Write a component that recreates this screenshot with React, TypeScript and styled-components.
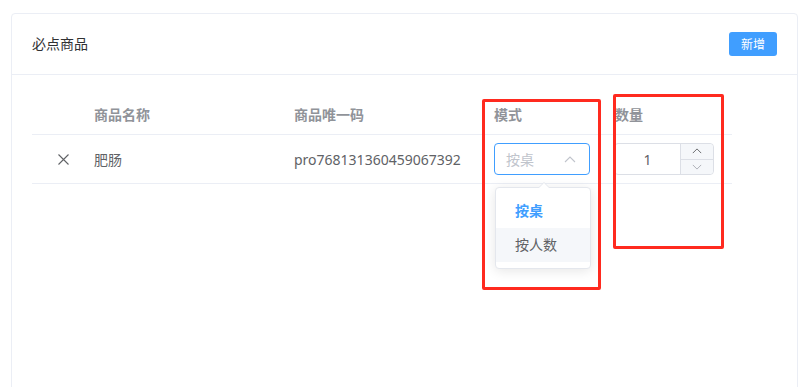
import styled, { createGlobalStyle } from 'styled-components';

const GlobalStyle = createGlobalStyle`
  html, body {
    margin: 0;
    padding: 0;
    background: #fff;
    height: 387px;
    overflow: hidden;
  }
  body {
    font-family: "Noto Sans", "Noto Sans CJK SC", sans-serif;
    font-size: 14px;
    color: #606266;
  }
`;

const Page = styled.div`
  position: relative;
  padding: 13px 8px 0 11px;
  height: 387px;
  box-sizing: border-box;
  overflow: hidden;
`;

const Card = styled.div`
  border: 1px solid #ebeef5;
  border-radius: 4px;
  background: #fff;
  height: 420px;
`;

const CardHeader = styled.div`
  display: flex;
  align-items: center;
  justify-content: space-between;
  padding: 18px 20px;
  border-bottom: 1px solid #ebeef5;
  line-height: 24px;
`;

const Title = styled.span`
  font-size: 14px;
  color: #303133;
`;

const PrimaryButton = styled.button`
  height: 24px;
  width: 48px;
  padding: 0;
  border: none;
  border-radius: 3px;
  background: #409eff;
  color: #fff;
  font-family: inherit;
  font-size: 12px;
`;

const CardBody = styled.div`
  padding: 20px;
`;

const Table = styled.div`
  width: 700px;
`;

const Row = styled.div<{ $head?: boolean }>`
  display: grid;
  grid-template-columns: 52px 200px 200px 121px 1fr;
  align-items: center;
  height: ${p => (p.$head ? '39px' : '48px')};
  border-bottom: 1px solid #ebeef5;
`;

const HeadCell = styled.div`
  padding-left: 10px;
  font-weight: bold;
  color: #909399;
  font-size: 14px;
  line-height: 23px;
`;

const Cell = styled.div`
  padding-left: 10px;
  font-size: 14px;
  color: #606266;
  line-height: 23px;
  position: relative;
`;

const IconCell = styled.div`
  padding-left: 26px;
  display: flex;
  align-items: center;
`;

const SelectBox = styled.div`
  box-sizing: border-box;
  width: 96px;
  height: 32px;
  border: 1px solid #409eff;
  border-radius: 4px;
  display: flex;
  align-items: center;
  justify-content: space-between;
  padding: 0 13px 0 11px;
  color: #c0c4cc;
  font-size: 14px;
`;

const Popper = styled.div`
  position: absolute;
  top: 44px;
  left: 11px;
  width: 96px;
  box-sizing: border-box;
  border: 1px solid #e4e7ed;
  border-radius: 4px;
  background: #fff;
  box-shadow: 0 2px 12px 0 rgba(0, 0, 0, 0.1);
  padding: 6px 0;
  z-index: 2;

  &::before {
    content: '';
    position: absolute;
    top: -6px;
    left: 42px;
    border-left: 6px solid transparent;
    border-right: 6px solid transparent;
    border-bottom: 6px solid #e4e7ed;
  }
  &::after {
    content: '';
    position: absolute;
    top: -5px;
    left: 43px;
    border-left: 5px solid transparent;
    border-right: 5px solid transparent;
    border-bottom: 5px solid #fff;
  }
`;

const Option = styled.div<{ $selected?: boolean; $hover?: boolean }>`
  height: 34px;
  line-height: 34px;
  padding-left: 19px;
  font-size: 14px;
  color: ${p => (p.$selected ? '#409eff' : '#606266')};
  font-weight: ${p => (p.$selected ? 'bold' : 'normal')};
  background: ${p => (p.$hover ? '#f5f7fa' : '#fff')};
`;

const NumberInput = styled.div`
  box-sizing: border-box;
  width: 100px;
  height: 32px;
  border: 1px solid #dcdfe6;
  border-radius: 4px;
  display: flex;
  margin-left: -1px;
`;

const NumberValue = styled.div`
  flex: 1;
  display: flex;
  align-items: center;
  justify-content: center;
  color: #606266;
  font-size: 14px;
`;

const Controls = styled.div`
  width: 32px;
  border-left: 1px solid #dcdfe6;
  display: flex;
  flex-direction: column;
`;

const ControlBtn = styled.div<{ $top?: boolean }>`
  flex: 1;
  background: #f5f7fa;
  display: flex;
  align-items: center;
  justify-content: center;
  border-bottom: ${p => (p.$top ? '1px solid #dcdfe6' : 'none')};
  border-radius: ${p => (p.$top ? '0 4px 0 0' : '0 0 4px 0')};
`;

const Highlight = styled.div`
  position: absolute;
  box-sizing: border-box;
  border: 3px solid #ff2a1f;
  border-radius: 2px;
`;

const Chevron = ({ up, size, color }: { up: boolean; size: number; color: string }) => (
  <svg width={size} height={size / 2 + 1} viewBox="0 0 12 7">
    <polyline
      points={up ? '1,6 6,1 11,6' : '1,1 6,6 11,1'}
      fill="none"
      stroke={color}
      strokeWidth="1.1"
    />
  </svg>
);

export default function App() {
  return (
    <>
      <GlobalStyle />
      <Page>
        <Card>
          <CardHeader>
            <Title>必点商品</Title>
            <PrimaryButton>新增</PrimaryButton>
          </CardHeader>
          <CardBody>
            <Table>
              <Row $head>
                <HeadCell />
                <HeadCell>商品名称</HeadCell>
                <HeadCell>商品唯一码</HeadCell>
                <HeadCell>模式</HeadCell>
                <HeadCell>数量</HeadCell>
              </Row>
              <Row>
                <IconCell>
                  <svg width="11" height="11" viewBox="0 0 11 11">
                    <path d="M0.5 0.5 L10.5 10.5 M10.5 0.5 L0.5 10.5" stroke="#606266" strokeWidth="1.1" />
                  </svg>
                </IconCell>
                <Cell>肥肠</Cell>
                <Cell>pro768131360459067392</Cell>
                <Cell>
                  <SelectBox>
                    <span>按桌</span>
                    <Chevron up size={12} color="#c0c4cc" />
                  </SelectBox>
                  <Popper>
                    <Option $selected>按桌</Option>
                    <Option $hover>按人数</Option>
                  </Popper>
                </Cell>
                <Cell>
                  <NumberInput>
                    <NumberValue>1</NumberValue>
                    <Controls>
                      <ControlBtn $top>
                        <Chevron up size={10} color="#606266" />
                      </ControlBtn>
                      <ControlBtn>
                        <Chevron up={false} size={10} color="#a8abb2" />
                      </ControlBtn>
                    </Controls>
                  </NumberInput>
                </Cell>
              </Row>
            </Table>
          </CardBody>
        </Card>
        <Highlight style={{ left: 482, top: 99, width: 119, height: 191 }} />
        <Highlight style={{ left: 613, top: 94, width: 111, height: 155 }} />
      </Page>
    </>
  );
}
